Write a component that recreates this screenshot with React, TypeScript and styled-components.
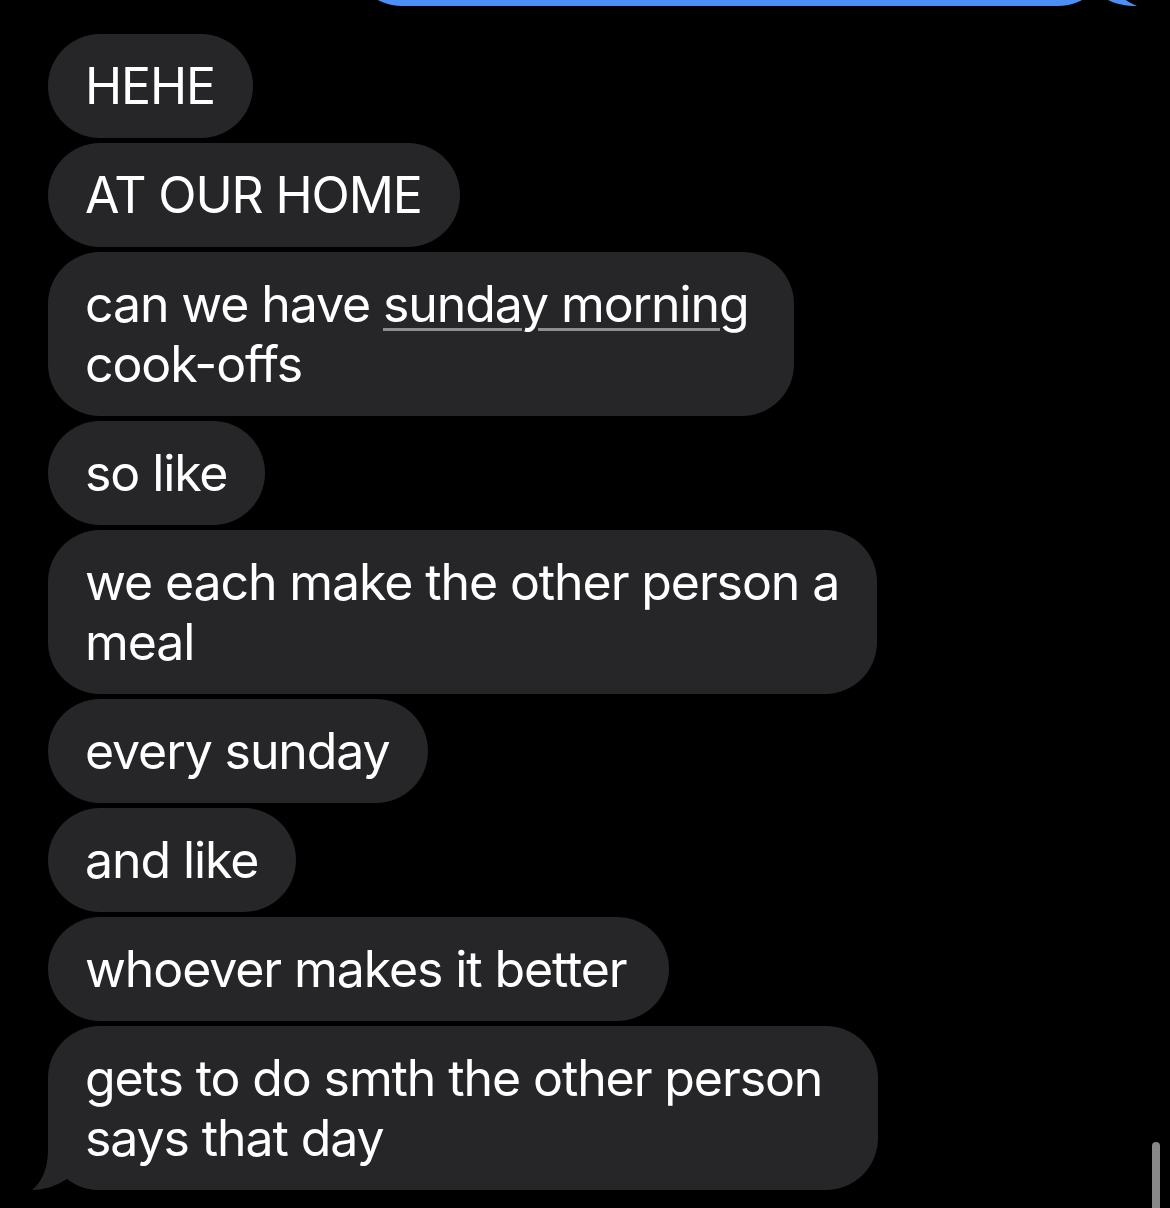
import React from "react";
import styled, { createGlobalStyle } from "styled-components";

const Global = createGlobalStyle`
  html, body {
    margin: 0;
    padding: 0;
    background: #000;
  }
  body {
    width: 1170px;
    height: 1208px;
    overflow: hidden;
    font-family: Inter, "Noto Sans", sans-serif;
  }
`;

const Screen = styled.div`
  position: relative;
  width: 1170px;
  height: 1208px;
  background: #000;
  overflow: hidden;
`;

const Thread = styled.div`
  display: flex;
  flex-direction: column;
  align-items: flex-start;
  gap: 5px;
  padding: 0 0 0 48px;
`;

const SentRow = styled.div`
  align-self: stretch;
  display: flex;
  justify-content: flex-end;
  padding-right: 60px;
  margin-top: -98px;
  margin-bottom: 23px;
`;

const SentBubble = styled.div`
  position: relative;
  width: 760px;
  height: 104px;
  border-radius: 52px;
  background: #4b8ff7;
`;

const Bubble = styled.div<{ $padRight?: number }>`
  position: relative;
  display: flex;
  flex-direction: column;
  padding: 22px ${(p) => p.$padRight ?? 38}px 22px 37px;
  border-radius: 52px;
  background: #262629;
  color: #fff;
  font-size: 50px;
  line-height: 60px;
  letter-spacing: -1.1px;
  white-space: nowrap;
`;

const Line = styled.span`
  position: relative;
  display: block;
`;

const Link = styled.span`
  text-decoration: underline;
  text-decoration-color: #8d8d92;
  text-decoration-thickness: 3px;
  text-underline-offset: 6px;
  text-decoration-skip-ink: auto;
`;

const LeftTail = styled.svg`
  position: absolute;
  bottom: 0;
  left: -16px;
  width: 70px;
  height: 52px;
`;

const RightTail = styled.svg`
  position: absolute;
  bottom: 0;
  right: -30px;
  width: 60px;
  height: 52px;
`;

const Scrollbar = styled.div`
  position: absolute;
  left: 1152px;
  top: 1142px;
  width: 8px;
  height: 80px;
  border-radius: 4px;
  background: #888;
`;

export default function App() {
  return (
    <Screen>
      <Global />
      <Thread>
        <SentRow>
          <SentBubble>
            <RightTail viewBox="0 0 60 52">
              <path
                d="M10 0 L30 0 L30 18 C30 34 42 46 57 52 C46 52 36 50 28 46 C24 42 20 36 14 30 Z"
                fill="#4b8ff7"
              />
            </RightTail>
          </SentBubble>
        </SentRow>
        <Bubble>
          <Line>HEHE</Line>
        </Bubble>
        <Bubble>
          <Line>AT OUR HOME</Line>
        </Bubble>
        <Bubble $padRight={46}>
          <Line>
            can we have <Link>sunday morning</Link>
          </Line>
          <Line>cook-offs</Line>
        </Bubble>
        <Bubble>
          <Line>so like</Line>
        </Bubble>
        <Bubble>
          <Line>we each make the other person a</Line>
          <Line>meal</Line>
        </Bubble>
        <Bubble>
          <Line>every sunday</Line>
        </Bubble>
        <Bubble>
          <Line>and like</Line>
        </Bubble>
        <Bubble $padRight={42}>
          <Line>whoever makes it better</Line>
        </Bubble>
        <Bubble $padRight={56}>
          <LeftTail viewBox="0 0 70 52">
            <path
              d="M16 0 L16 12 C16 30 10 44 0 52 C12 52 24 48 35 41 C45 49 56 52 70 52 L70 0 Z"
              fill="#262629"
            />
          </LeftTail>
          <Line>gets to do smth the other person</Line>
          <Line>says that day</Line>
        </Bubble>
      </Thread>
      <Scrollbar />
    </Screen>
  );
}
